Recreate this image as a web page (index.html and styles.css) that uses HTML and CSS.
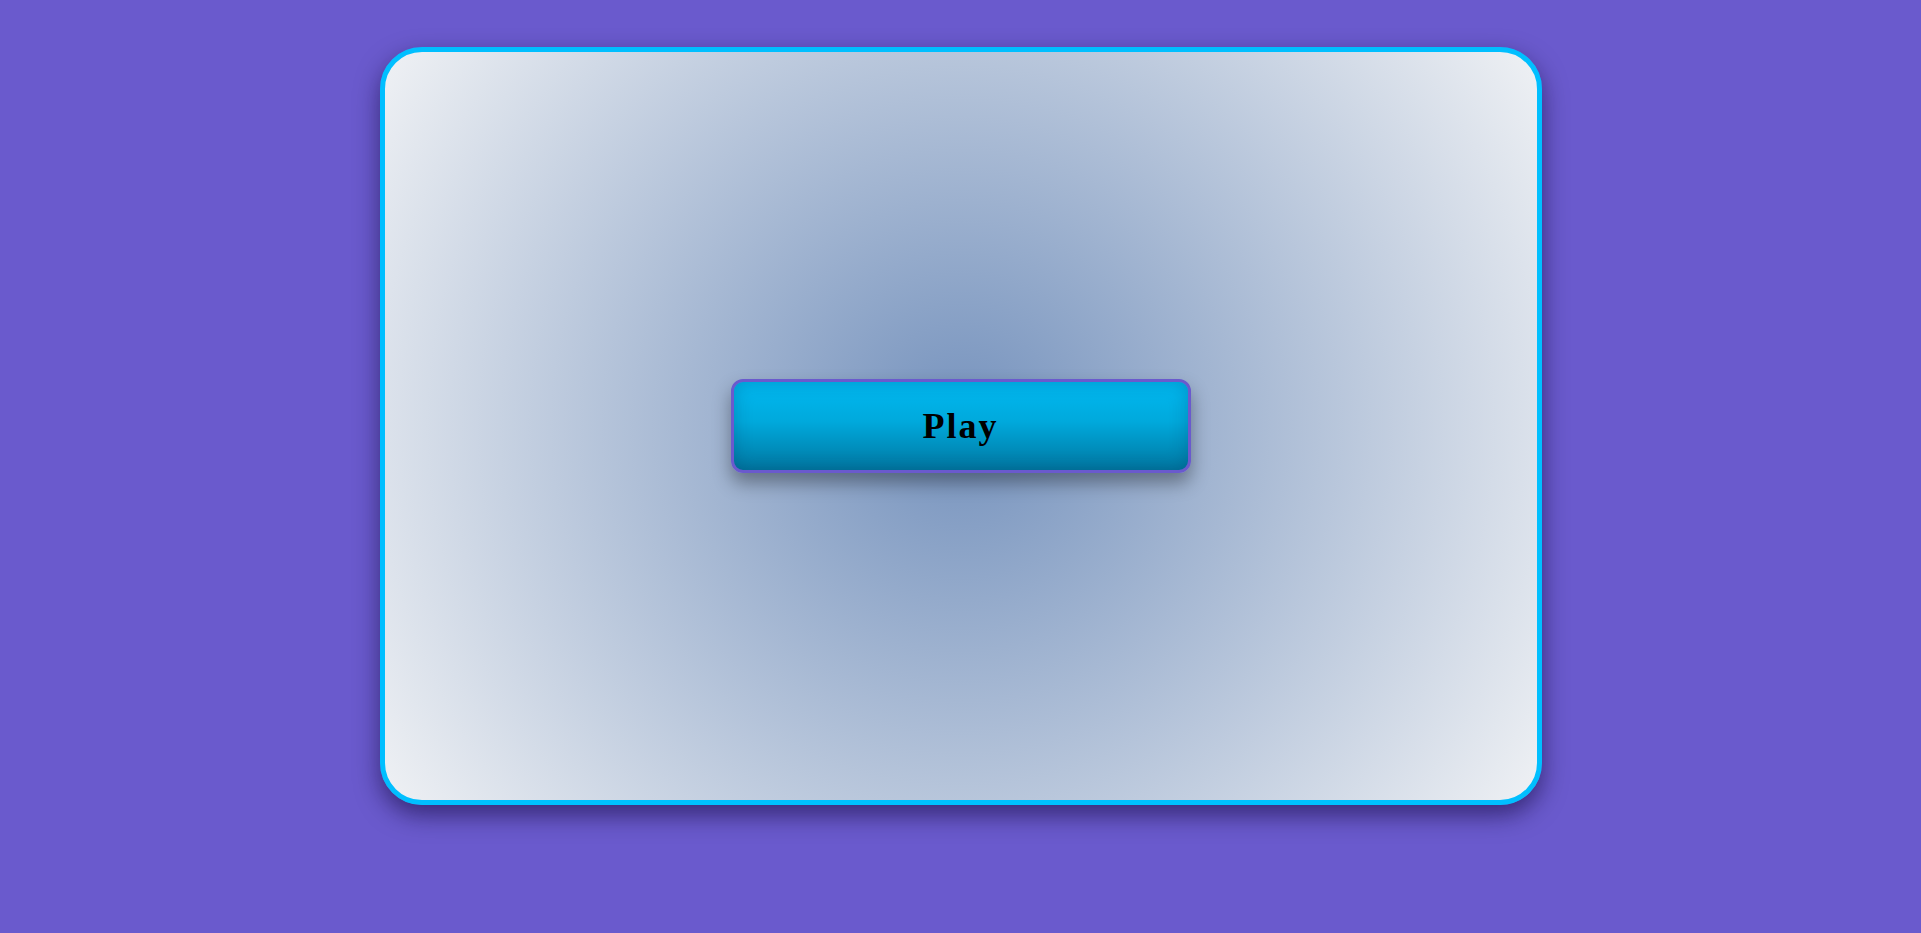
FILE: index.html
```html
<!DOCTYPE html>
<html lang="en">
<head>
<meta charset="utf-8">
<title>Play</title>
<link rel="stylesheet" href="styles.css">
</head>
<body>
<main class="card">
  <button class="play-btn" type="button">Play</button>
</main>
</body>
</html>
```
FILE: styles.css
```css
html, body {
  margin: 0;
  padding: 0;
}
body {
  background: #6a5acd;
  min-height: 933px;
  font-family: "Liberation Serif", "Times New Roman", serif;
  overflow: hidden;
}
.card {
  box-sizing: border-box;
  width: 1162px;
  height: 758px;
  margin: 47px auto 0;
  border: 5px solid #00bfff;
  border-radius: 42px;
  background: radial-gradient(circle farthest-corner at center, #7592bd 0%, #eff1f4 100%);
  box-shadow: 0 10px 24px rgba(20, 10, 60, 0.6);
  display: flex;
  align-items: center;
  justify-content: center;
}
.play-btn {
  box-sizing: border-box;
  width: 460px;
  height: 94px;
  border: 3px solid #6a5acd;
  border-radius: 12px;
  background: linear-gradient(to bottom, #00b9f1 0%, #00a9dc 45%, #0078a2 100%);
  box-shadow: 0 10px 18px rgba(0, 0, 0, 0.35), inset 0 0 18px rgba(0, 40, 80, 0.25);
  font-family: "Liberation Serif", "Times New Roman", serif;
  font-weight: bold;
  font-size: 36px;
  letter-spacing: 2px;
  color: #000;
  padding: 0;
  cursor: pointer;
}
```
